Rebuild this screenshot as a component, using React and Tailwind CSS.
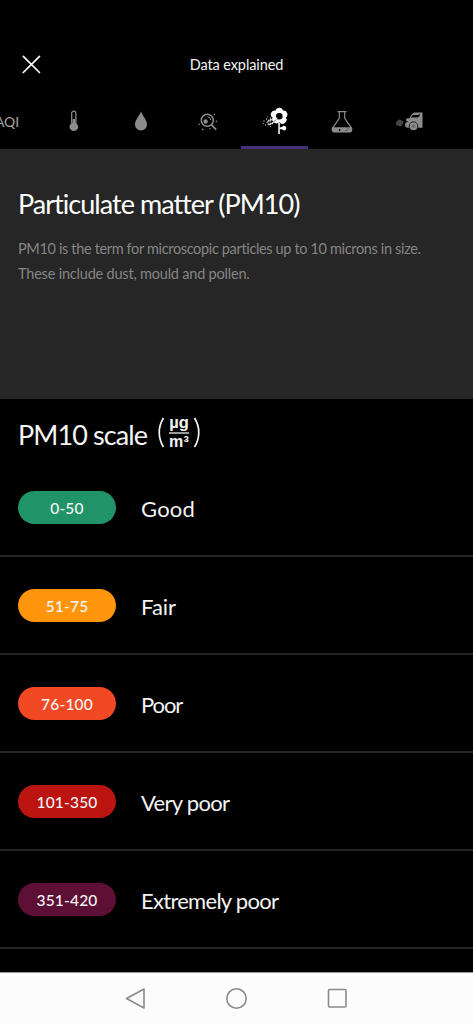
import React, { useState } from 'react';

const ThermometerIcon = () => (
  <svg width="10" height="22" viewBox="0 0 10 22" fill="none">
    <path d="M2.7 13V3.2a2.1 2.1 0 0 1 4.2 0V13" stroke="currentColor" strokeWidth="1.3" />
    <path d="M3.6 9h2.4v6H3.6z" fill="currentColor" />
    <circle cx="4.8" cy="16.7" r="4.3" fill="currentColor" />
  </svg>
);

const DropIcon = () => (
  <svg width="14" height="22" viewBox="0 0 14 22" fill="currentColor">
    <path d="M7 1.3C8 5.2 13 9.8 13 14.6a6 6 0 0 1-12 0C1 9.8 6 5.2 7 1.3z" />
  </svg>
);

const ParticleSearchIcon = () => (
  <svg width="20" height="20" viewBox="0 0 20 20" className="mt-[2px]" fill="none" stroke="currentColor">
    <circle cx="9.3" cy="8.3" r="6" strokeWidth="1.5" />
    <path d="M13.4 12.8l4.8 4.9" strokeWidth="1.8" />
    <circle cx="7.6" cy="9.5" r="2.2" fill="currentColor" stroke="none" />
    <path d="M9.5 4.7a3.6 3.6 0 0 1 3.3 3.3" strokeWidth="1" />
    <g fill="currentColor" stroke="none">
      <circle cx="16.4" cy="2.4" r=".8" />
      <circle cx="18.3" cy="9.4" r=".8" />
      <circle cx="1.2" cy="12.3" r=".8" />
      <circle cx="4.6" cy="17.4" r=".9" />
      <circle cx="12" cy="16.7" r=".7" />
    </g>
  </svg>
);

const PollenIcon = () => (
  <svg width="26" height="28" viewBox="0 0 26 28" fill="currentColor">
    <path
      fillRule="evenodd"
      d="M13.6 3.6a3.8 3.8 0 0 1 7.4 0 3.9 3.9 0 0 1 2.8 7 3.9 3.9 0 0 1-6.400 4.500 3.900 3.900 0 0 1-6.400-4.200 3.900 3.900 0 0 1 2.600-7.300zM17.300 6a3.300 3.300 0 1 0 0 6.600 3.300 3.300 0 0 0 0-6.600z"
    />
    <path d="M16.300 15.500h1.500v11.500h-1.500z" />
    <path d="M17.500 20.800l3-1.200a2.200 2.200 0 1 1 0 3l-3-.6z" />
    <path d="M15.500 11L4 15.500M14 10.500L6 13.500M14 14.500L5 17.500M11 16.500l-5 1.500" stroke="currentColor" strokeWidth="1.2" strokeDasharray="1.6 .8" />
    <path d="M8 10.5h1v1H8zM4 11.500h1v1H4zM1.500 13.500h1v1h-1zM3 17.500h1v1H3zM5 9.500h.8v.8H5zM1 16h.8v.8H1zM8 19h.8v.8H8z" />
    <path d="M16 11.500l-4 3" stroke="#000" strokeWidth=".8" strokeDasharray="1 1" />
  </svg>
);

const FlaskIcon = () => (
  <svg width="24" height="24" viewBox="0 0 24 24" className="mt-px" fill="none" stroke="currentColor">
    <path d="M7.5 1.7h9M9.3 2v6.3L2 18.8M14.7 2v6.3l7.3 10.5" strokeWidth="1.2" />
    <path d="M2.4 17.3h19.2c1.3 2.5.7 5.2-1.6 5.2H4c-2.3 0-2.9-2.7-1.6-5.2z" fill="currentColor" stroke="none" />
    <g fill="#000" stroke="none">
      <circle cx="9.7" cy="20" r=".9" />
      <circle cx="16" cy="20.5" r=".6" />
      <circle cx="18" cy="19" r=".5" />
    </g>
  </svg>
);

const ExhaustIcon = () => (
  <svg width="28" height="20" viewBox="0 0 28 20" fill="currentColor">
    <g fill="#454545">
      <circle cx="3" cy="12.5" r="2.2" />
      <circle cx="4.3" cy="10.7" r="2.1" />
      <circle cx="6.3" cy="11.7" r="2.1" />
      <circle cx="5" cy="13.5" r="2.1" />
    </g>
    <path d="M19.500 1.500h8v15.300h-15l-1.800-.8c-.8-1.500-.8-2.800 0-4.300l2.300-1-2.300-1.500 1.300-2h2.500c1.500-3 3-5 5-5.700z" />
    <path d="M15.800 6.500l2-2.400h5l2-.8v1.700l-2.300 1.500z" fill="#000" />
    <circle cx="18.500" cy="15.200" r="4.700" fill="#000" />
    <circle cx="18.500" cy="15.200" r="3.900" />
    <circle cx="18.500" cy="15.200" r="1.800" fill="#6a6a6a" />
  </svg>
);

const tabs = [
  { id: 'aqi', icon: <span className="pl-px text-[14px] tracking-[-0.1px] text-[#a3a3a3]">AQI</span> },
  { id: 'temperature', icon: <ThermometerIcon /> },
  { id: 'humidity', icon: <DropIcon /> },
  { id: 'pm25', icon: <ParticleSearchIcon /> },
  { id: 'pm10', icon: <PollenIcon /> },
  { id: 'voc', icon: <FlaskIcon /> },
  { id: 'no2', icon: <ExhaustIcon /> },
];

const levels = [
  { range: '0-50', label: 'Good', color: 'bg-[#209468]', spacing: 'tracking-[0.2px]' },
  { range: '51-75', label: 'Fair', color: 'bg-[#ff940d]', spacing: 'tracking-[0px]' },
  { range: '76-100', label: 'Poor', color: 'bg-[#f04924]', spacing: 'tracking-[-1.1px]' },
  { range: '101-350', label: 'Very poor', color: 'bg-[#bb1411]', spacing: 'tracking-[-0.7px]' },
  { range: '351-420', label: 'Extremely poor', color: 'bg-[#5e0f35]', spacing: 'tracking-[-0.72px]' },
];

const App = () => {
  const [active, setActive] = useState('pm10');

  return (
    <div className="flex h-[1024px] w-[473px] flex-col overflow-hidden bg-black font-['Lato',sans-serif] text-[#f4f4f4] [font-variant-ligatures:none]">
      <header className="grid h-[96px] shrink-0 grid-cols-[1fr_auto_1fr] items-center pt-[33px]">
        <button className="ml-[22px] w-[19px]" aria-label="Close">
          <svg width="19" height="19" viewBox="0 0 19 19" stroke="#fff" strokeWidth="1.7" strokeLinecap="round">
            <path d="M1.3 1.3l16.2 16.2M17.5 1.3L1.3 17.5" />
          </svg>
        </button>
        <h1 className="text-[14.5px] tracking-[-0.1px] whitespace-nowrap">Data explained</h1>
      </header>

      <nav className="-ml-[27px] flex h-[53px] shrink-0">
        {tabs.map((tab) => (
          <button
            key={tab.id}
            onClick={() => setActive(tab.id)}
            className={`flex w-[67px] shrink-0 items-center justify-center border-b-3 ${
              active === tab.id ? 'border-[#47307a] text-white' : 'border-transparent text-[#8c8c8c]'
            }`}
          >
            {tab.icon}
          </button>
        ))}
      </nav>

      <section className="h-[250px] shrink-0 bg-[#262626] px-[18px] pt-[36px]">
        <h2 className="text-[27px] leading-[38px] tracking-[-0.97px] whitespace-nowrap text-white">Particulate matter (PM10)</h2>
        <p className="mt-[13px] text-[14.5px] leading-[25px] whitespace-nowrap text-[#858585]">
          <span className="block tracking-[-0.35px]">PM10 is the term for microscopic particles up to 10 microns in size.</span>
          <span className="block tracking-[-0.2px]">These include dust, mould and pollen.</span>
        </p>
      </section>

      <section className="flex min-h-0 flex-1 flex-col overflow-hidden">
        <div className="flex h-[60px] shrink-0 items-center pt-[13px] pl-[18px]">
          <h2 className="text-[27px] tracking-[-0.9px] whitespace-nowrap">PM10 scale</h2>
          <div className="-mt-[6px] ml-[10px] flex items-center">
            <svg width="8" height="31" viewBox="0 0 8 31" fill="none" stroke="currentColor" strokeWidth="1.7">
              <path d="M6.5 1C.8 10 .8 21 6.500 30" />
            </svg>
            <div className="mx-[4px] flex w-[20px] flex-col items-center font-['Liberation_Sans',sans-serif] font-bold">
              <span className="pb-[4px] text-[16.5px] leading-[12px]">µg</span>
              <span className="h-[2px] w-full bg-[#999]" />
              <span className="text-[16px] leading-[15px] tracking-[0.3px] whitespace-nowrap">m³</span>
            </div>
            <svg width="8" height="31" viewBox="0 0 8 31" fill="none" stroke="currentColor" strokeWidth="1.7">
              <path d="M1.5 1c5.7 9 5.7 20 0 29" />
            </svg>
          </div>
        </div>
        <ul>
          {levels.map((level) => (
            <li key={level.range} className="flex h-[98px] items-center border-b-2 border-[#242424] px-[18px]">
              <span className={`flex h-[33px] w-[98px] items-center justify-center rounded-full pt-[3px] text-[15.5px] font-medium tracking-[0.2px] ${level.color}`}>
                {level.range}
              </span>
              <span className={`ml-[25px] pt-[3px] text-[22px] whitespace-nowrap ${level.spacing}`}>{level.label}</span>
            </li>
          ))}
        </ul>
      </section>

      <footer className="flex h-[52px] shrink-0 items-center justify-center gap-[79px] border-t border-[#999] bg-[#fcfcfc] text-[#8a8a8a]">
        <svg width="22" height="22" viewBox="0 0 22 22" fill="none" stroke="currentColor" strokeWidth="1.6" strokeLinejoin="round">
          <path d="M19 1v19L1.5 10.5z" />
        </svg>
        <svg width="22" height="22" viewBox="0 0 22 22" fill="none" stroke="currentColor" strokeWidth="1.6">
          <circle cx="10.5" cy="10.5" r="9.7" />
        </svg>
        <svg width="22" height="22" viewBox="0 0 22 22" fill="none" stroke="currentColor" strokeWidth="1.6">
          <rect x="1.5" y="1.5" width="17.5" height="17.5" rx="1" />
        </svg>
      </footer>
    </div>
  );
};

export default App;
